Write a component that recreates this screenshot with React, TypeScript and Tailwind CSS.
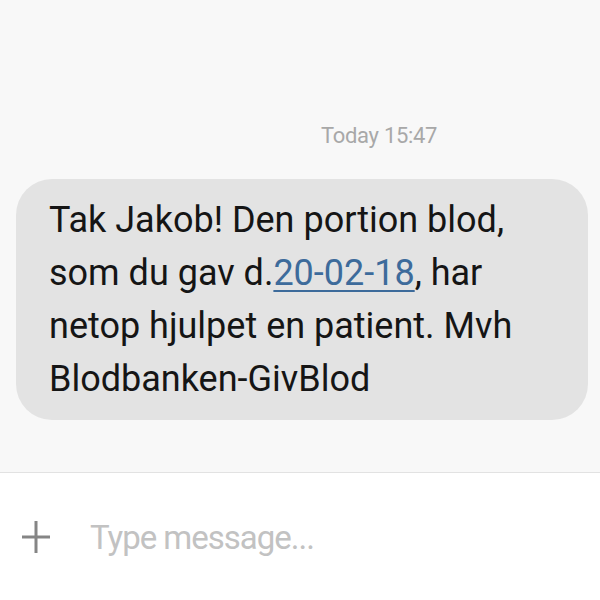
import React from "react";

export default function App() {
  return (
    <div className="w-[600px] h-[600px] flex flex-col bg-white overflow-hidden" style={{ fontFamily: "Roboto, 'Liberation Sans', sans-serif" }}>
      <div className="h-[473px] bg-[#f8f8f8] border-b border-[#e2e2e2] flex flex-col">
        <div className="pt-[121px] pl-[321px] text-[22px] leading-[30px] text-[#a8a8a8] tracking-[-0.3px]">Today 15:47</div>
        <div className="mt-[28px] ml-[16px] w-[572px] h-[241px] rounded-[36px] bg-[#e3e3e3] pl-[33px] pt-[15px] text-[36px] leading-[53px] text-[#151515]">
          Tak Jakob! Den portion blod,
          <br />
          som du gav d.<span className="text-[#3d6b9b] underline decoration-[2px] underline-offset-[5px]">20-02-18</span>, har
          <br />
          netop hjulpet en patient. Mvh
          <br />
          Blodbanken-GivBlod
        </div>
      </div>
      <div className="flex items-center pl-[21px] pt-[45px]">
        <svg width="30" height="32" viewBox="0 0 30 32" className="shrink-0 -mt-[3px]">
          <path d="M15 0 V32 M1 16 H29" stroke="#858585" strokeWidth="3" fill="none" />
        </svg>
        <div className="ml-[39px] text-[33px] leading-[40px] text-[#c2c2c2] tracking-[-1px]">Type message...</div>
      </div>
    </div>
  );
}
